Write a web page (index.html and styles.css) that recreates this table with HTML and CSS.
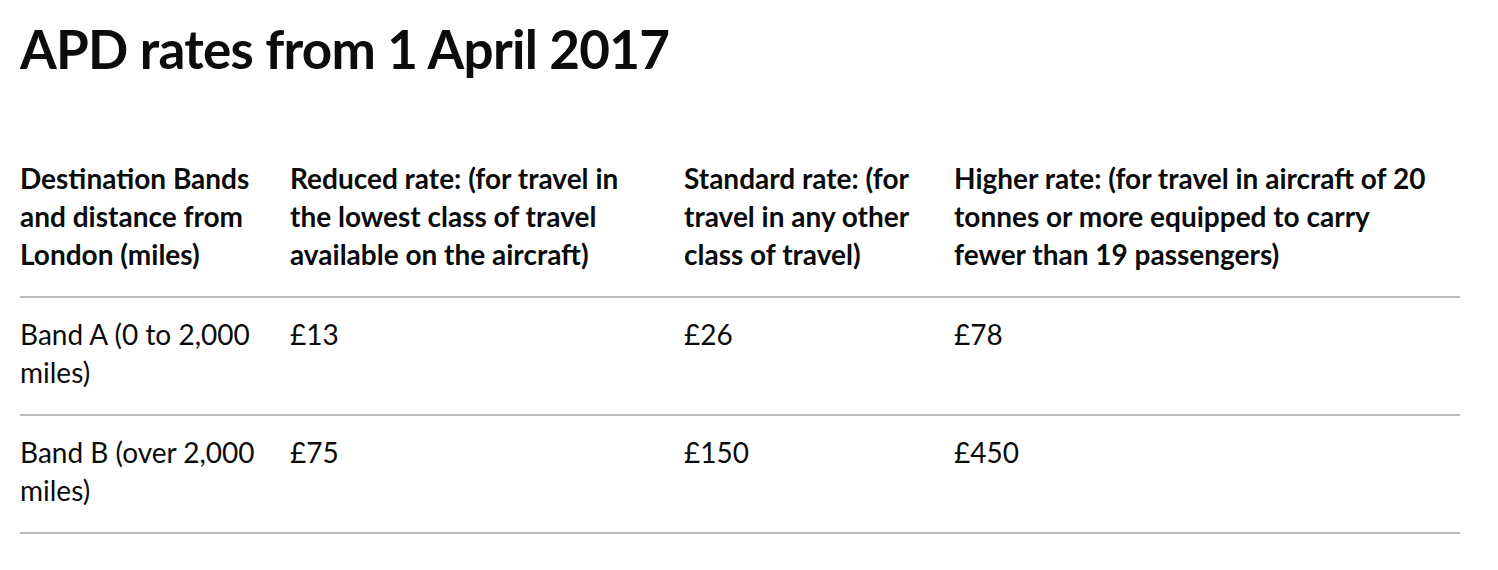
FILE: index.html
```html
<!DOCTYPE html>
<html lang="en">
<head>
<meta charset="utf-8">
<title>APD rates from 1 April 2017</title>
<link rel="stylesheet" href="styles.css">
</head>
<body>
<main class="page">
  <h2 class="title">APD rates from 1 April 2017</h2>
  <table class="rates">
    <colgroup>
      <col class="c1"><col class="c2"><col class="c3"><col class="c4">
    </colgroup>
    <thead>
      <tr>
        <th>Destination Bands and distance from London (miles)</th>
        <th>Reduced rate: (for travel in the lowest class of travel available on the aircraft)</th>
        <th>Standard rate: (for travel in any other class of travel)</th>
        <th>Higher rate: (for travel in aircraft of 20 tonnes or more equipped to carry fewer than 19 passengers)</th>
      </tr>
    </thead>
    <tbody>
      <tr>
        <td>Band A (0 to 2,000 miles)</td>
        <td>£13</td>
        <td>£26</td>
        <td>£78</td>
      </tr>
      <tr>
        <td>Band B (over 2,000 miles)</td>
        <td>£75</td>
        <td>£150</td>
        <td>£450</td>
      </tr>
    </tbody>
  </table>
</main>
</body>
</html>
```
FILE: styles.css
```css
html, body {
  margin: 0;
  padding: 0;
  background: #ffffff;
}
body {
  font-family: Lato, "Noto Sans", Arial, sans-serif;
  color: #0b0c0c;
}
.page {
  padding: 0 38px 0 20px;
}
.title {
  margin: 0;
  padding-top: 19px;
  font-size: 53px;
  line-height: 60px;
  font-weight: 700;
  letter-spacing: -0.75px;
}
.rates {
  margin-top: 65px;
  width: 1440px;
  border-collapse: collapse;
  table-layout: fixed;
  font-size: 28px;
  line-height: 38px;
}
.c1 { width: 270px; }
.c2 { width: 394px; }
.c3 { width: 270px; }
.c4 { width: 506px; }
.rates th,
.rates td {
  text-align: left;
  vertical-align: top;
  padding: 17px 20px 23px 0;
  border-bottom: 2px solid #bbbcbd;
}
.rates th {
  font-weight: 700;
  padding-top: 15px;
}
.rates td {
  font-weight: 400;
}
```
